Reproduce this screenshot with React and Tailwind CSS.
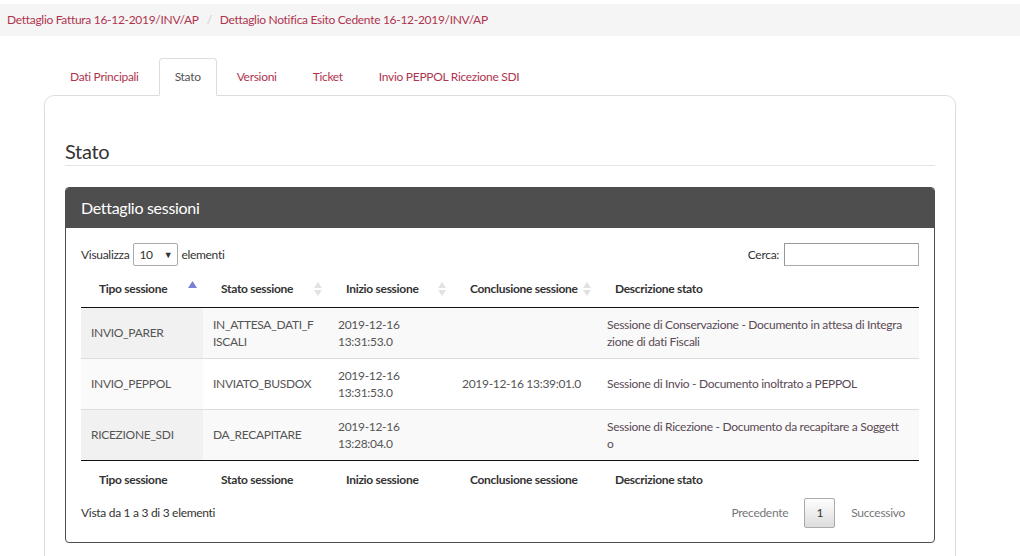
import React from 'react';

const FONT = { fontFamily: 'Lato, "Open Sans", sans-serif' };

const TABS = ['Dati Principali', 'Stato', 'Versioni', 'Ticket', 'Invio PEPPOL Ricezione SDI'];

const COLS = [
  { label: 'Tipo sessione', w: 'w-[122px]', sort: 'asc' },
  { label: 'Stato sessione', w: 'w-[125px]', sort: 'both' },
  { label: 'Inizio sessione', w: 'w-[124px]', sort: 'both' },
  { label: 'Conclusione sessione', w: 'w-[145px]', sort: 'both' },
  { label: 'Descrizione stato', w: '', sort: null },
];

const ROWS = [
  {
    tipo: ['INVIO_PARER'],
    stato: ['IN_ATTESA_DATI_F', 'ISCALI'],
    inizio: ['2019-12-16', '13:31:53.0'],
    fine: [],
    descr: ['Sessione di Conservazione - Documento in attesa di Integra', 'zione di dati Fiscali'],
  },
  {
    tipo: ['INVIO_PEPPOL'],
    stato: ['INVIATO_BUSDOX'],
    inizio: ['2019-12-16', '13:31:53.0'],
    fine: ['2019-12-16 13:39:01.0'],
    descr: ['Sessione di Invio - Documento inoltrato a PEPPOL'],
  },
  {
    tipo: ['RICEZIONE_SDI'],
    stato: ['DA_RECAPITARE'],
    inizio: ['2019-12-16', '13:28:04.0'],
    fine: [],
    descr: ['Sessione di Ricezione - Documento da recapitare a Soggett', 'o'],
  },
];

function SortIcon({ type }) {
  if (type === 'asc') {
    return (
      <svg width="9" height="7" viewBox="0 0 9 7" className="mb-[8px]">
        <path d="M4.5 0 L9 7 L0 7 Z" fill="#7a7fd8" />
      </svg>
    );
  }
  return (
    <svg width="8" height="14" viewBox="0 0 8 14">
      <path d="M4 0 L8 6 L0 6 Z" fill="#e2e2e2" />
      <path d="M4 14 L8 8 L0 8 Z" fill="#e2e2e2" />
    </svg>
  );
}

function Lines({ items }) {
  return items.map((t, i) => (
    <div key={i} className="whitespace-nowrap">{t}</div>
  ));
}

export default function App() {
  return (
    <div className="h-[556px] w-[1020px] overflow-hidden bg-white text-[12px] tracking-[-0.3px] text-[#555]" style={FONT}>
      {/* Breadcrumb */}
      <div className="mt-[4px] h-[32px] bg-[#f5f5f5] flex items-center px-[7px] text-[12px]">
        <span className="text-[#b0344e]">Dettaglio Fattura 16-12-2019/INV/AP</span>
        <span className="text-[#cccccc] px-[8px]">/</span>
        <span className="text-[#b0344e]">Dettaglio Notifica Esito Cedente 16-12-2019/INV/AP</span>
      </div>

      <div className="ml-[44px] w-[912px] mt-[22px]">
        {/* Tabs */}
        <div className="flex gap-[4px] pl-[10px] relative z-10 -mb-px">
          {TABS.map(t => (
            <div
              key={t}
              className={`h-[38px] px-[15px] flex items-center text-[12px] rounded-t-[4px] border ${
                t === 'Stato'
                  ? 'bg-white border-[#dddddd] border-b-white text-[#555]'
                  : 'border-transparent text-[#b0344e]'
              }`}
            >
              {t}
            </div>
          ))}
        </div>

        {/* Outer panel */}
        <div className="border border-[#dddddd] rounded-[10px] px-[20px] pt-[43px] pb-[40px]">
          <div className="text-[20px] text-[#333] leading-[24px] pb-[2px] border-b border-[#e5e5e5]">Stato</div>

          {/* Dark panel */}
          <div className="mt-[21px] rounded-[4px] border border-[#4d4d4d]">
            <div className="h-[40px] bg-[#4e4e4e] flex items-center px-[15px] text-white text-[16px] rounded-t-[3px]">
              Dettaglio sessioni
            </div>
            <div className="px-[15px] pt-[15px] pb-[14px]">
              <div className="flex items-center justify-between h-[23px]">
                <div className="flex items-center text-[#333]">
                  <span>Visualizza</span>
                  <div className="w-[45px] h-[23px] border border-[#aaaaaa] rounded-[2px] flex items-center justify-between px-[5px] ml-[4px] mr-[3px] bg-white">
                    <span>10</span>
                    <span className="text-[9px]">▼</span>
                  </div>
                  <span>elementi</span>
                </div>
                <div className="flex items-center gap-[5px] text-[#333]">
                  <span>Cerca:</span>
                  <div className="w-[135px] h-[23px] border border-[#aaaaaa] border-t-[#999] border-l-[#999] bg-white" />
                </div>
              </div>

              <table className="w-full table-fixed border-collapse mt-[9px]">
                <thead>
                  <tr className="h-[32px] border-b border-[#111]">
                    {COLS.map(c => (
                      <th key={c.label} className={`${c.w} text-left font-bold text-[#333] pl-[18px] pr-[6px] pb-[4px]`}>
                        <div className="flex items-center justify-between">
                          <span className="whitespace-nowrap">{c.label}</span>
                          {c.sort && <SortIcon type={c.sort} />}
                        </div>
                      </th>
                    ))}
                  </tr>
                </thead>
                <tbody>
                  {ROWS.map((r, i) => {
                    const odd = i % 2 === 0;
                    return (
                      <tr
                        key={i}
                        className={`h-[51px] leading-[17px] border-t border-[#dddddd] first:border-t-0 ${odd ? 'bg-[#f9f9f9]' : 'bg-white'}`}
                      >
                        <td className={`px-[10px] align-middle ${odd ? 'bg-[#f1f1f1]' : 'bg-[#fafafa]'}`}>
                          <Lines items={r.tipo} />
                        </td>
                        <td className="px-[10px] align-middle"><Lines items={r.stato} /></td>
                        <td className="px-[10px] align-middle"><Lines items={r.inizio} /></td>
                        <td className="px-[10px] align-middle"><Lines items={r.fine} /></td>
                        <td className="px-[10px] align-middle text-[#5a4a55]"><Lines items={r.descr} /></td>
                      </tr>
                    );
                  })}
                </tbody>
                <tfoot>
                  <tr className="border-t border-[#111] h-[36px]">
                    {COLS.map(c => (
                      <th key={c.label} className="text-left font-bold text-[#333] pl-[18px] pt-[4px] whitespace-nowrap">
                        {c.label}
                      </th>
                    ))}
                  </tr>
                </tfoot>
              </table>

              <div className="flex items-center justify-between mt-[2px] h-[30px]">
                <span className="text-[#333]">Vista da 1 a 3 di 3 elementi</span>
                <div className="flex items-center text-[#777]">
                  <span className="pl-[14px] pr-[16px]">Precedente</span>
                  <div className="w-[31px] h-[30px] flex items-center justify-center border border-[#aaaaaa] rounded-[2px] bg-gradient-to-b from-white to-[#dcdcdc] text-[#333]">
                    1
                  </div>
                  <span className="pl-[16px] pr-[14px]">Successivo</span>
                </div>
              </div>
            </div>
          </div>
        </div>
      </div>
    </div>
  );
}
